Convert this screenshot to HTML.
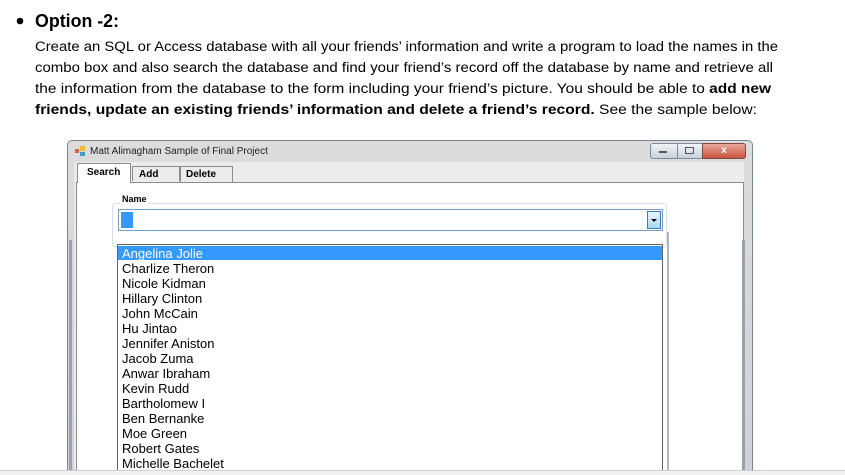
<!DOCTYPE html>
<html><head><meta charset="utf-8"><style>
html,body{margin:0;padding:0;background:#fff;width:845px;height:475px;overflow:hidden;position:relative;font-family:"Liberation Sans",sans-serif}
.abs{position:absolute}
.item{position:absolute;left:122px;font-size:13px;color:#000;line-height:15px;white-space:nowrap}
</style></head><body>
<svg class="abs" style="left:0;top:0" width="845" height="150">
<circle cx="20" cy="21" r="3.3" fill="#000"/>
<text x="35" y="27" font-family="Liberation Sans" font-weight="bold" font-size="18" textLength="84" lengthAdjust="spacingAndGlyphs">Option -2:</text>
<g font-family="Liberation Sans" font-size="13.5" fill="#000">
<text x="35" y="51" textLength="743" lengthAdjust="spacingAndGlyphs">Create an SQL or Access database with all your friends’ information and write a program to load the names in the</text>
<text x="35" y="72" textLength="738" lengthAdjust="spacingAndGlyphs">combo box and also search the database and find your friend’s record off the database by name and retrieve all</text>
<text x="35" y="93" textLength="736" lengthAdjust="spacingAndGlyphs">the information from the database to the form including your friend’s picture. You should be able to <tspan font-weight="bold">add new</tspan></text>
<text x="35" y="114" textLength="722" lengthAdjust="spacingAndGlyphs"><tspan font-weight="bold">friends, update an existing friends’ information and delete a friend’s record.</tspan> See the sample below:</text>
</g>
</svg>
<div class="abs" style="left:67px;top:140px;width:684px;height:335px;background:linear-gradient(#dcdcdc,#cfd2d6);border:1px solid #7a8594;border-bottom:none;border-radius:5px 5px 0 0"></div>
<div class="abs" style="left:90px;top:146px;font-size:10px;color:#222">Matt Alimagham Sample of Final Project</div>
<div class="abs" style="left:75px;top:149px;width:4px;height:4px;background:#d64"></div>
<div class="abs" style="left:80px;top:146px;width:5px;height:5px;background:#eb3"></div>
<div class="abs" style="left:80px;top:152px;width:5px;height:4px;background:#49c"></div>
<div class="abs" style="left:650px;top:143px;width:26px;height:14px;background:linear-gradient(#f0f3f7,#c9d1db);border:1px solid #7f8a99;border-radius:3px 0 0 3px"></div>
<div class="abs" style="left:677px;top:143px;width:24px;height:14px;background:linear-gradient(#f0f3f7,#c9d1db);border:1px solid #7f8a99"></div>
<div class="abs" style="left:702px;top:143px;width:42px;height:14px;background:linear-gradient(#e9a89a,#c9543f);border:1px solid #7f4a40;border-radius:0 3px 3px 0;color:#fff;font-size:10px;font-weight:bold;text-align:center;line-height:14px">x</div>
<div class="abs" style="left:659px;top:151px;width:8px;height:2px;background:#555"></div>
<div class="abs" style="left:685px;top:147px;width:7px;height:5px;border:1px solid #555"></div>
<div class="abs" style="left:74px;top:162px;width:670px;height:313px;background:#ececec"></div>
<div class="abs" style="left:76px;top:182px;width:666px;height:293px;background:#fff;border:1px solid #8c8c8c;border-bottom:none"></div>
<div class="abs" style="left:132px;top:166px;height:15px;background:#ececec;border:1px solid #8c8c8c;border-bottom:none;font-size:10px;font-weight:bold;line-height:15px;padding-left:6px;box-sizing:border-box;width:48px">Add</div>
<div class="abs" style="left:180px;top:166px;width:46px;height:15px;background:#ececec;border:1px solid #8c8c8c;border-bottom:none;font-size:10px;font-weight:bold;line-height:15px;padding-left:5px">Delete</div>
<div class="abs" style="left:77px;top:163px;width:54px;height:20px;background:#fff;border:1px solid #8c8c8c;border-bottom:none;font-size:10px;font-weight:bold;line-height:18px;padding-left:9px;box-sizing:border-box">Search</div>
<div class="abs" style="left:112px;top:203px;width:553px;height:42px;border:1px solid #d5dfe5;border-radius:3px"></div>
<div class="abs" style="left:120px;top:194px;background:#fff;font-size:9px;font-weight:bold;padding:0 2px">Name</div>
<div class="abs" style="left:118px;top:209px;width:545px;height:22px;border:1px solid #7a9cc6;background:#fff;box-sizing:border-box"></div>
<div class="abs" style="left:121px;top:212px;width:12px;height:16px;background:#3399ff"></div>
<div class="abs" style="left:647px;top:211px;width:14px;height:18px;background:linear-gradient(#eaf6fd,#a7d9f5);border:1px solid #3c7fb1;box-sizing:border-box"></div>
<div class="abs" style="left:651px;top:219px;width:0;height:0;border-left:3px solid transparent;border-right:3px solid transparent;border-top:3px solid #000"></div>
<div class="abs" style="left:117px;top:244px;width:546px;height:231px;background:#fff;border:1px solid #646464;border-bottom:none;box-sizing:border-box"></div>
<div class="abs" style="left:118px;top:246px;width:544px;height:14px;background:#3399ff"></div>
<div class="abs" style="left:667px;top:232px;width:2px;height:243px;background:#b5b5b5"></div>
<div class="abs" style="left:69px;top:240px;width:3px;height:235px;background:#9aa3ad"></div>
<div class="abs" style="left:742px;top:240px;width:3px;height:235px;background:#9aa3ad"></div>
<div class="item" style="top:246px;color:#fff">Angelina Jolie</div>
<div class="item" style="top:261px">Charlize Theron</div>
<div class="item" style="top:276px">Nicole Kidman</div>
<div class="item" style="top:291px">Hillary Clinton</div>
<div class="item" style="top:306px">John McCain</div>
<div class="item" style="top:321px">Hu Jintao</div>
<div class="item" style="top:336px">Jennifer Aniston</div>
<div class="item" style="top:351px">Jacob Zuma</div>
<div class="item" style="top:366px">Anwar Ibraham</div>
<div class="item" style="top:381px">Kevin Rudd</div>
<div class="item" style="top:396px">Bartholomew I</div>
<div class="item" style="top:411px">Ben Bernanke</div>
<div class="item" style="top:426px">Moe Green</div>
<div class="item" style="top:441px">Robert Gates</div>
<div class="item" style="top:456px">Michelle Bachelet</div>
<div class="abs" style="left:0;top:470px;width:845px;height:5px;background:#f0f0f0;border-top:1px solid #d0d0d0"></div>
</body></html>
